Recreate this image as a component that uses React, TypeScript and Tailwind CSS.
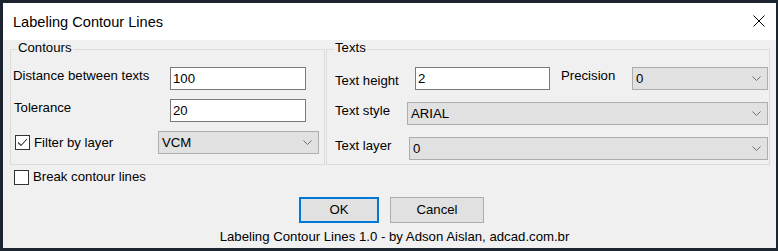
import React from "react";

const FONT = { fontFamily: '"Liberation Sans", Arial, sans-serif' };

const Chevron = () => (
  <svg width="9" height="5" viewBox="0 0 9 5" className="shrink-0">
    <path d="M0.5 0.5 L4.5 4.5 L8.5 0.5" fill="none" stroke="#707070" strokeWidth="1" />
  </svg>
);

function Select({ value, className }: { value: string; className: string }) {
  return (
    <div
      className={
        "flex h-[23px] shrink-0 items-center justify-between border border-[#adadad] bg-[#e1e1e1] pl-[3px] pr-[6px] " +
        className
      }
    >
      <span className="leading-[16px]">{value}</span>
      <Chevron />
    </div>
  );
}

function Input({ value, className }: { value: string; className: string }) {
  return (
    <div
      className={
        "flex h-[23px] shrink-0 items-center border border-[#7a7a7a] bg-white pl-[2px] " + className
      }
    >
      <span className="leading-[16px]">{value}</span>
    </div>
  );
}

function Check({ checked }: { checked: boolean }) {
  return (
    <div className="flex h-[15px] w-[15px] shrink-0 items-center justify-center border border-[#333333] bg-white">
      {checked && (
        <svg width="13" height="13" viewBox="0 0 13 13">
          <path d="M2 6.5 L5 9.5 L11 3" fill="none" stroke="#333333" strokeWidth="1.1" />
        </svg>
      )}
    </div>
  );
}

export default function App() {
  return (
    <div
      className="flex h-[251px] w-[778px] flex-col bg-[#1c2430] pb-[3px] pl-[3px] pr-[2px] pt-[3px] text-[13.2px] text-black"
      style={FONT}
    >
      {/* title bar */}
      <div className="flex h-[37px] shrink-0 items-center justify-between bg-white pl-[10px] pr-[11px]">
        <span className="pt-[1px] text-[14.6px] leading-[18px]">Labeling Contour Lines</span>
        <svg width="12" height="12" viewBox="0 0 12 12" className="mb-[2px]">
          <path d="M0.5 0.5 L11.5 11.5 M11.5 0.5 L0.5 11.5" stroke="#000" strokeWidth="1" />
        </svg>
      </div>

      {/* body */}
      <div className="flex flex-1 flex-col bg-[#f0f0f0] pl-[7px] pt-[9px]">
        <div className="flex gap-[1px]">
          {/* Contours */}
          <div className="relative h-[116px] w-[315px] border border-[#dcdcdc]">
            <span className="absolute left-[6px] top-[-10px] bg-[#f0f0f0] px-[1px] leading-[16px]">
              Contours
            </span>
            <div className="flex flex-col gap-[9px] pt-[17px]">
              <div className="flex items-start pl-[2px]">
                <span className="mt-[1px] w-[157px] leading-[16px]">Distance between texts</span>
                <Input value="100" className="w-[136px]" />
              </div>
              <div className="flex items-start pl-[3px]">
                <span className="mt-[1px] w-[156px] leading-[16px]">Tolerance</span>
                <Input value="20" className="w-[136px]" />
              </div>
              <div className="flex items-center">
                <div className="flex w-[147px] items-center pl-[4px]">
                  <Check checked />
                  <span className="ml-[4px] leading-[16px]">Filter by layer</span>
                </div>
                <Select value="VCM" className="w-[161px]" />
              </div>
            </div>
          </div>

          {/* Texts */}
          <div className="relative h-[116px] w-[444px] border border-[#dcdcdc]">
            <span className="absolute left-[7px] top-[-10px] bg-[#f0f0f0] px-[1px] leading-[16px]">
              Texts
            </span>
            <div className="flex flex-col gap-[12px] pt-[17px]">
              <div className="flex items-start pl-[8px]">
                <span className="mt-[6px] w-[80px] leading-[16px]">Text height</span>
                <Input value="2" className="w-[135px]" />
                <span className="ml-[11px] mt-[1px] w-[71px] leading-[16px]">Precision</span>
                <Select value="0" className="w-[136px]" />
              </div>
              <div className="flex items-start pl-[8px]">
                <span className="mt-[1px] w-[72px] leading-[16px]">Text style</span>
                <Select value="ARIAL" className="w-[361px]" />
              </div>
              <div className="flex items-start pl-[8px]">
                <span className="mt-[1px] w-[74px] leading-[16px]">Text layer</span>
                <Select value="0" className="w-[359px]" />
              </div>
            </div>
          </div>
        </div>

        <div className="mt-[4px] flex items-center pl-[4px]">
          <Check checked={false} />
          <span className="ml-[4px] leading-[16px]">Break contour lines</span>
        </div>

        <div className="mt-[12px] flex gap-[11px] pl-[289px]">
          <div className="flex h-[26px] w-[80px] items-center justify-center border-2 border-[#0078d7] bg-[#e1e1e1]">
            OK
          </div>
          <div className="flex h-[26px] w-[94px] items-center justify-center border border-[#adadad] bg-[#e1e1e1]">
            Cancel
          </div>
        </div>

        <div className="mt-[6px] flex justify-center pl-[3px] leading-[16px]">
          Labeling Contour Lines 1.0 - by Adson Aislan, adcad.com.br
        </div>
      </div>
    </div>
  );
}
